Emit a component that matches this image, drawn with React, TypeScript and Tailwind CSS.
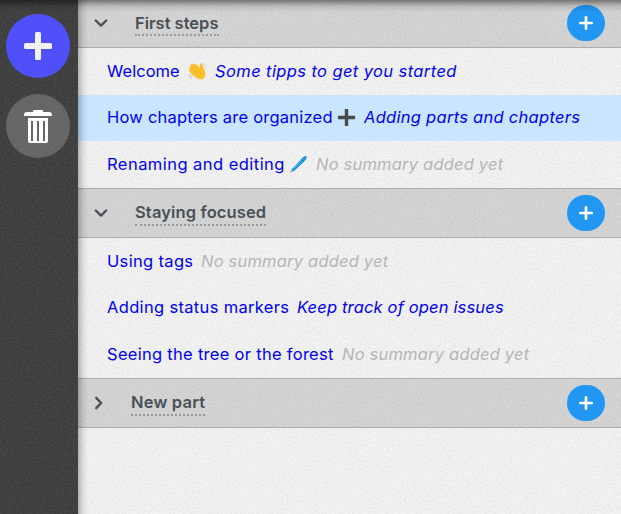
import React from "react";

type Chapter = {
  title: string;
  titleClass: string;
  icon?: "wave" | "plus" | "pen";
  summary?: string;
  summaryClass: string;
  active?: boolean;
};

const EMPTY = "tracking-[0.2px]";

const first: Chapter[] = [
  { title: "Welcome", titleClass: "w-[73px] tracking-[0.05px]", icon: "wave", summary: "Some tipps to get you started", summaryClass: "tracking-[0.4px]" },
  { title: "How chapters are organized", titleClass: "w-[226px] tracking-[0.22px]", icon: "plus", summary: "Adding parts and chapters", summaryClass: "tracking-[0.28px]", active: true },
  { title: "Renaming and editing", titleClass: "w-[178px] tracking-[0.46px]", icon: "pen", summaryClass: EMPTY },
];

const second: Chapter[] = [
  { title: "Using tags", titleClass: "w-[86px] tracking-[0.33px]", summaryClass: EMPTY },
  { title: "Adding status markers", titleClass: "w-[182px] tracking-[0.33px]", summary: "Keep track of open issues", summaryClass: "tracking-[0.16px]" },
  { title: "Seeing the tree or the forest", titleClass: "w-[227px] tracking-[0.29px]", summaryClass: EMPTY },
];

function Grain({ id, className, tone }: { id: string; className: string; tone: number }) {
  return (
    <svg className={"pointer-events-none absolute inset-0 h-full w-full " + className} aria-hidden="true">
      <filter id={id} x="0" y="0" width="100%" height="100%" colorInterpolationFilters="sRGB">
        <feTurbulence type="fractalNoise" baseFrequency="0.55" numOctaves="3" />
        <feColorMatrix type="matrix" values={`0 0 0 0 ${tone}  0 0 0 0 ${tone}  0 0 0 0 ${tone}  2.4 0 0 0 -0.7`} />
      </filter>
      <rect width="100%" height="100%" filter={`url(#${id})`} />
    </svg>
  );
}

function Emoji({ kind }: { kind: "wave" | "plus" | "pen" }) {
  if (kind === "plus")
    return (
      <svg width="19" height="19" viewBox="0 0 19 19" className="ml-1 shrink-0">
        <path d="M7.8.9h3.4v6.9h6.9v3.4h-6.9v6.9H7.8v-6.9H.9V7.8h6.9z" fill="#4a4a4a" />
      </svg>
    );
  if (kind === "pen")
    return (
      <svg width="19" height="19" viewBox="0 0 19 19" className="ml-1 shrink-0">
        <path d="M1 17.8 3 13.5l2.4 2.3z" fill="#8d9aa2" />
        <path d="M3 13.9 12.8 3.4C14.8 1.3 16.6.6 17.4 1.3s.2 2.6-1.7 4.8L5.2 15.9z" fill="#1e96e0" />
        <path d="m5 13 8.5-9" stroke="#6cc5f5" strokeWidth="1" />
        <path d="m12 4.1 2.9 2.7" stroke="#1475b5" strokeWidth=".8" />
      </svg>
    );
  return (
    <svg width="19" height="19" viewBox="0 0 19 19" className="ml-2 shrink-0">
      <path d="M1.5 7.1C.6 5.9 1.6 4.8 2.6 5.3L2.4 4c-.3-1.4 1.2-2.2 2.2-1.2.1-1.4 1.7-1.9 2.8-.8l4.600 3.200-.2-2.400c-.1-1.600 2.200-1.900 2.700-.3L15.900 6.700c1 2 1.800 4.400 1.400 6.700-.7 4.100-4.600 4.600-7.300 3.300C6.900 15.500 4 12.700 1.700 9.800c-.8-1.100-.8-2-.2-2.700z" fill="#fbc02d" />
      <path d="m3.400 5.600 5.100 5.100M5.200 3.400l5.300 5.400M12.300 6.300c-1.200 1.900-1 4 .4 5.300" fill="none" stroke="#efac22" strokeWidth=".7" strokeLinecap="round" />
      <path d="M.8 12.500c.5 2 1.600 3 3.300 3.500M2.600 12.400c.4 1 1 1.500 1.800 1.800M14.600 1.100c1.600.7 2.400 1.800 2.700 3.300" fill="none" stroke="#aebbc2" strokeWidth=".8" />
    </svg>
  );
}

function Row({ c }: { c: Chapter }) {
  return (
    <div className={"flex min-h-0 flex-1 items-center pb-px pl-[29px] text-[16.5px] whitespace-nowrap text-[#0000ee] first:pt-px first:pb-0 " + (c.active ? "bg-[#c9e5ff]" : "")}>
      <span className={"shrink-0 " + c.titleClass}>{c.title}</span>
      {c.icon && <Emoji kind={c.icon} />}
      <span className={"ml-2 italic " + c.summaryClass + (c.summary ? "" : " text-[#b5b5b5]")}>{c.summary ?? "No summary added yet"}</span>
    </div>
  );
}

function PartHeader({ title, textClass, open = true, top = false }: { title: string; textClass: string; open?: boolean; top?: boolean }) {
  return (
    <div className={"flex shrink-0 items-center border-b border-[#adadad] bg-black/12 pr-4 pl-[15px] text-[#495057] " + (top ? "h-12 pb-px" : "h-[50px] border-t")}>
      <svg width="16" height="16" viewBox="0 0 16 16" fill="none" stroke="currentColor" strokeWidth="2.4" strokeLinecap="round" strokeLinejoin="round" className="shrink-0">
        <path d={open ? "M2.8 5.5 8 10.6l5.2-5.1" : "M3.2 2.8 8.2 8l-5 5.2"} />
      </svg>
      <span className={"h-6 border-b-2 border-dotted border-[#999] text-[16.5px] font-semibold whitespace-nowrap " + (top ? "mt-[2px] leading-[22px] " : "mt-px leading-5 ") + textClass}>{title}</span>
      <button className="ml-auto flex h-9 w-[38px] shrink-0 items-center justify-center rounded-full bg-[#2196f3] text-white" aria-label="Add chapter">
        <svg width="14" height="14" viewBox="0 0 14 14" stroke="currentColor" strokeWidth="2.7" strokeLinecap="round"><path d="M7 1.3v11.4M1.3 7h11.4" /></svg>
      </button>
    </div>
  );
}

export default function App() {
  return (
    <div className="relative flex h-[514px] w-[621px] overflow-hidden bg-[#f4f4f4] font-['Inter','Noto_Sans',sans-serif]">
      <aside className="relative flex w-[78px] shrink-0 flex-col items-center gap-4 bg-[#3b3b3b] pt-[14px] pr-[2px]">
        <Grain id="dark-grain" tone={1} className="opacity-[0.06]" />
        <button className="relative flex size-16 items-center justify-center rounded-full bg-[#5050fb] text-[#f1f1f1]" aria-label="Add">
          <svg width="28" height="28" viewBox="0 0 28 28" fill="currentColor"><rect x="11" width="6" height="28" rx="1.5" /><rect y="11" width="28" height="6" rx="1.5" /></svg>
        </button>
        <button className="relative flex size-16 items-center justify-center rounded-full bg-white/20 text-white" aria-label="Trash">
          <svg width="28" height="34" viewBox="0 0 28 34" fill="currentColor">
            <path d="M0 5.5C0 4 1 3 3 3h6V1.8Q9 1 10 1h8q1 0 1 .8V3h6c2 0 3 1 3 2.5V7H0z" />
            <path fillRule="evenodd" d="M4 9h20v23q0 2-2 2H6q-2 0-2-2zM7 12v20h2V12zm6 0v20h2V12zm6 0v20h2V12z" />
          </svg>
        </button>
      </aside>
      <main className="relative min-w-0 flex-1">
        <Grain id="light-grain" tone={0} className="opacity-[0.038]" />
        <div className="relative flex flex-col">
          <PartHeader top title="First steps" textClass="ml-[26px] w-[84px]" />
          <div className="flex h-[140px] shrink-0 flex-col">{first.map((c) => <Row key={c.title} c={c} />)}</div>
          <PartHeader title="Staying focused" textClass="ml-[26px] w-[131px] tracking-[0.13px]" />
          <div className="flex h-[140px] shrink-0 flex-col">{second.map((c) => <Row key={c.title} c={c} />)}</div>
          <PartHeader title="New part" open={false} textClass="ml-[22px] w-[74px] tracking-[0.2px]" />
        </div>
        <div className="pointer-events-none absolute inset-y-0 left-0 w-[10px] bg-linear-to-r from-black/25 via-black/8 to-transparent" />
      </main>
      <div className="pointer-events-none absolute inset-x-0 top-0 h-[12px] bg-linear-to-b from-black/45 via-black/12 to-transparent" />
    </div>
  );
}
